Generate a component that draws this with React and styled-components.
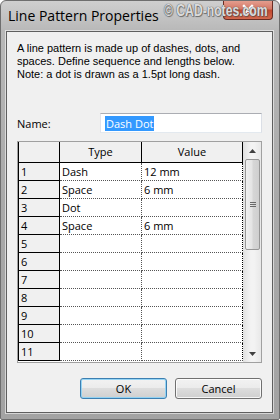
import React from 'react';
import styled, { createGlobalStyle } from 'styled-components';

const GlobalStyle = createGlobalStyle`
  html, body {
    margin: 0;
    padding: 0;
    background: #ffffff;
  }
  body {
    font-family: "Open Sans", "Noto Sans", sans-serif;
    font-size: 11px;
    color: #000;
  }
`;

const rows = [
  { type: 'Dash', value: '12 mm' },
  { type: 'Space', value: '6 mm' },
  { type: 'Dot', value: '' },
  { type: 'Space', value: '6 mm' },
  { type: '', value: '' },
  { type: '', value: '' },
  { type: '', value: '' },
  { type: '', value: '' },
  { type: '', value: '' },
  { type: '', value: '' },
  { type: '', value: '' },
];

const App = () => {
  return (
    <>
      <GlobalStyle />
      <Window>
        <TitleBar>
          <Title>Line Pattern Properties</Title>
          <CloseButton>
            <svg width="14" height="12" viewBox="0 0 14 12">
              <path d="M3 2 L11 10 M11 2 L3 10" stroke="#fff" strokeWidth="2.4" strokeLinecap="square" />
            </svg>
          </CloseButton>
          <Watermark>© CAD-notes.com</Watermark>
        </TitleBar>

        <Client>
          <Description>
            <Line>A line pattern is made up of dashes, dots, and</Line>
            <Line>spaces. Define sequence and lengths below.</Line>
            <Line>Note: a dot is drawn as a 1.5pt long dash.</Line>
          </Description>

          <NameRow>
            <Label>Name:</Label>
            <TextBox>
              <Selected>Dash Dot</Selected>
            </TextBox>
          </NameRow>

          <GridBox>
            <Table>
              <thead>
                <tr>
                  <Corner />
                  <HeadCell>Type</HeadCell>
                  <HeadCell>Value</HeadCell>
                </tr>
              </thead>
              <tbody>
                {rows.map((r, i) => (
                  <tr key={i}>
                    <RowHead>{i + 1}</RowHead>
                    <Cell>{r.type}</Cell>
                    <Cell $last>{r.value}</Cell>
                  </tr>
                ))}
              </tbody>
            </Table>
            <ScrollBar>
              <Arrow>
                <svg width="7" height="4" viewBox="0 0 7 4">
                  <path d="M0 4 L3.5 0 L7 4 Z" fill="#404040" />
                </svg>
              </Arrow>
              <Track>
                <Thumb>
                  <Grip />
                  <Grip />
                  <Grip />
                </Thumb>
              </Track>
              <Arrow>
                <svg width="7" height="4" viewBox="0 0 7 4">
                  <path d="M0 0 L7 0 L3.5 4 Z" fill="#404040" />
                </svg>
              </Arrow>
            </ScrollBar>
          </GridBox>

          <ButtonRow>
            <Button $primary>OK</Button>
            <Button>Cancel</Button>
          </ButtonRow>
        </Client>
      </Window>
    </>
  );
};

const Window = styled.div`
  box-sizing: border-box;
  width: 280px;
  height: 420px;
  display: flex;
  flex-direction: column;
  background: linear-gradient(to bottom, #cfcfcf 0px, #b8b8b8 30px, #a9a9a9 200px, #a3a3a3 420px);
  border: 1px solid #6e6e6e;
  border-radius: 6px 6px 2px 2px;
  overflow: hidden;
`;

const TitleBar = styled.div`
  position: relative;
  height: 30px;
  display: flex;
  align-items: center;
  padding-left: 7px;
  flex-shrink: 0;
`;

const Title = styled.div`
  font-family: "Open Sans", "Noto Sans", sans-serif;
  font-size: 14px;
  color: #000;
  margin-top: -2px;
`;

const CloseButton = styled.div`
  position: absolute;
  top: -1px;
  right: 6px;
  width: 50px;
  height: 20px;
  display: flex;
  align-items: center;
  justify-content: center;
  box-sizing: border-box;
  border: 1px solid #6a2d24;
  border-top: none;
  border-radius: 0 0 4px 4px;
  background: linear-gradient(to bottom, #e6a293 0%, #d47a68 45%, #c2482f 55%, #d2694f 100%);
`;

const Watermark = styled.div`
  position: absolute;
  top: 0px;
  left: 163px;
  white-space: nowrap;
  font-family: "Liberation Sans", Arial, sans-serif;
  font-weight: bold;
  font-size: 16px;
  line-height: 20px;
  transform: scaleX(0.76);
  transform-origin: left center;
  color: rgba(255, 255, 255, 0.8);
  text-shadow: 0 0 1px #5a5a5a, 0 0 1px #5a5a5a, 1px 1px 1px rgba(60, 60, 60, 0.6);
`;

const Client = styled.div`
  flex: 1;
  display: flex;
  flex-direction: column;
  margin: 0 6px 6px 5px;
  background: #f0f0f0;
  border: 1px solid #5f5f5f;
  box-shadow: 0 0 0 1px rgba(255, 255, 255, 0.55);
  padding: 0 10px 0 10px;
`;

const Description = styled.div`
  margin-top: 10px;
  display: flex;
  flex-direction: column;
`;

const Line = styled.div`
  font-family: "Liberation Sans", Arial, sans-serif;
  font-size: 11px;
  line-height: 13px;
  height: 13px;
  white-space: nowrap;
`;

const NameRow = styled.div`
  display: flex;
  align-items: center;
  margin-top: 32px;
  height: 20px;
`;

const Label = styled.div`
  width: 83px;
`;

const TextBox = styled.div`
  box-sizing: border-box;
  flex: 1;
  height: 20px;
  background: #fff;
  border: 1px solid #e3e9ef;
  border-top-color: #abadb3;
  border-left-color: #e2e3ea;
  border-right-color: #dbdfe6;
  display: flex;
  align-items: center;
  padding-left: 4px;
`;

const Selected = styled.span`
  background: #3399ff;
  color: #fff;
  line-height: 15px;
  padding: 0 1px;
`;

const GridBox = styled.div`
  margin-top: 8px;
  display: flex;
  border: 1px solid #a0a0a0;
  height: 222px;
  box-sizing: border-box;
  background: #fff;
`;

const Table = styled.table`
  border-collapse: collapse;
  width: 225px;
  table-layout: fixed;
  align-self: flex-start;
  border-left: 1px solid #000;

  tr {
    height: 18px;
  }
  thead tr {
    height: 20px;
  }
  td, th {
    padding: 0;
    overflow: hidden;
    white-space: nowrap;
  }
`;

const Corner = styled.th`
  width: 40px;
  background: #f0f0f0;
  border-right: 1px solid #000;
  border-bottom: 1px solid #000;
`;

const HeadCell = styled.th`
  font-weight: normal;
  background: #f0f0f0;
  border-right: 1px solid #000;
  border-bottom: 1px solid #000;
  text-align: center;
  &:nth-child(2) {
    width: 81px;
  }
`;

const RowHead = styled.td`
  background: #f0f0f0;
  border-right: 1px solid #000;
  border-bottom: 1px solid #000;
  padding-left: 2px !important;
`;

const Cell = styled.td`
  background: #fff;
  border-right: 1px dotted ${(p) => (p.$last ? '#000' : '#555')};
  border-bottom: 1px dotted #555;
  padding-left: 2px !important;
`;

const ScrollBar = styled.div`
  width: 17px;
  margin-left: auto;
  display: flex;
  flex-direction: column;
  background: linear-gradient(to right, #e3e3e3, #f3f3f3 40%, #f3f3f3 60%, #e8e8e8);
  border-left: 1px solid #e0e0e0;
`;

const Arrow = styled.div`
  height: 17px;
  display: flex;
  align-items: center;
  justify-content: center;
  flex-shrink: 0;
`;

const Track = styled.div`
  flex: 1;
  display: flex;
  flex-direction: column;
`;

const Thumb = styled.div`
  box-sizing: border-box;
  margin: 0 1px;
  height: 91px;
  border: 1px solid #979797;
  border-radius: 2px;
  background: linear-gradient(to right, #f0f0f0, #e4e4e4 45%, #d6d6d6 55%, #cfcfcf);
  display: flex;
  flex-direction: column;
  align-items: center;
  justify-content: center;
  gap: 1px;
`;

const Grip = styled.div`
  width: 6px;
  height: 1px;
  background: #6a6a6a;
`;

const ButtonRow = styled.div`
  display: flex;
  justify-content: flex-end;
  gap: 8px;
  margin-top: 15px;
`;

const Button = styled.button`
  box-sizing: border-box;
  width: 87px;
  height: 21px;
  font-family: "Open Sans", "Noto Sans", sans-serif;
  font-size: 11px;
  color: #000;
  padding: 0;
  border: 1px solid ${(p) => (p.$primary ? '#3c7fb1' : '#707070')};
  border-radius: 3px;
  background: linear-gradient(to bottom, #f2f2f2 0%, #ebebeb 49%, #dddddd 50%, #cfcfcf 100%);
  box-shadow: inset 0 0 0 1px ${(p) => (p.$primary ? 'rgba(140, 210, 245, 0.9)' : 'rgba(255, 255, 255, 0.8)')};
`;

export default App;
